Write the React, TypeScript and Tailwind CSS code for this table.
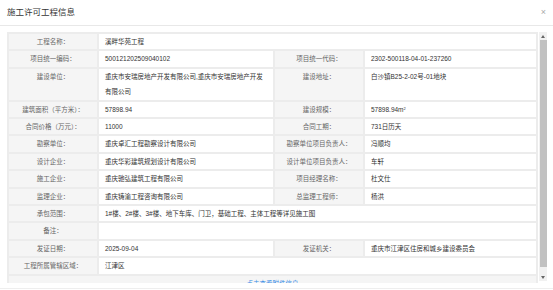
type Row =
  | { kind: 'pair'; l1: string; v1: string; l2: string; v2: React.ReactNode }
  | { kind: 'wide'; l1: string; v1: string };

const ROWS: Row[] = [
  { kind: 'wide', l1: '工程名称：', v1: '溪畔华苑工程' },
  { kind: 'pair', l1: '项目统一编码：', v1: '500121202509040102', l2: '项目统一代码：', v2: '2302-500118-04-01-237260' },
  {
    kind: 'pair',
    l1: '建设单位：',
    v1: '重庆市安瑞房地产开发有限公司,重庆市安瑞房地产开发有限公司',
    l2: '建设地址：',
    v2: '白沙镇B25-2-02号-01地块',
  },
  {
    kind: 'pair',
    l1: '建筑面积（平方米）：',
    v1: '57898.94',
    l2: '建设规模：',
    v2: (
      <>
        57898.94m<sup className="text-[4px]">2</sup>
      </>
    ),
  },
  { kind: 'pair', l1: '合同价格（万元）：', v1: '11000', l2: '合同工期：', v2: '731日历天' },
  { kind: 'pair', l1: '勘察单位：', v1: '重庆卓汇工程勘察设计有限公司', l2: '勘察单位项目负责人：', v2: '冯顺均' },
  { kind: 'pair', l1: '设计企业：', v1: '重庆华彩建筑规划设计有限公司', l2: '设计单位项目负责人：', v2: '车轩' },
  { kind: 'pair', l1: '施工企业：', v1: '重庆驰弘建筑工程有限公司', l2: '项目经理名称：', v2: '杜文仕' },
  { kind: 'pair', l1: '监理企业：', v1: '重庆铸渝工程咨询有限公司', l2: '总监理工程师：', v2: '杨洪' },
  { kind: 'wide', l1: '承包范围：', v1: '1#楼、2#楼、3#楼、地下车库、门卫，基础工程、主体工程等详见施工图' },
  { kind: 'wide', l1: '备注：', v1: '' },
  { kind: 'pair', l1: '发证日期：', v1: '2025-09-04', l2: '发证机关：', v2: '重庆市江津区住房和城乡建设委员会' },
  { kind: 'wide', l1: '工程所属管辖区域：', v1: '江津区' },
];

const label = 'border-2 border-[#ececec] bg-[#f5f5f5] text-center align-top text-[#666]';
const value = 'border-2 border-[#ececec] bg-white pl-[6px] pr-[4px] align-top text-[#333]';

export default function App() {
  return (
    <div
      className="flex h-[290px] w-[553px] flex-col overflow-hidden bg-white"
      style={{ fontFamily: '"Liberation Sans", "Noto Sans CJK SC", sans-serif' }}
    >
      <div className="flex h-[26px] shrink-0 items-center justify-between border-b border-[#e8e8e8] pl-[7px] pr-[7px]">
        <span className="text-[8.5px] text-[#333]">施工许可工程信息</span>
        <span className="text-[9px] leading-none text-[#aaa]">×</span>
      </div>

      <div className="mt-[5px] flex h-[252px] shrink-0">
        <div className="flex-1 overflow-hidden pl-[7px] pt-[1px]">
          <table className="w-full table-fixed border-collapse text-[6.5px] leading-[15.4px]">
            <colgroup>
              <col className="w-[90px]" />
              <col className="w-[176px]" />
              <col className="w-[90px]" />
              <col />
            </colgroup>
            <tbody>
              {ROWS.map((r) =>
                r.kind === 'wide' ? (
                  <tr key={r.l1}>
                    <td className={label}>{r.l1}</td>
                    <td className={value} colSpan={3}>
                      {r.v1}
                    </td>
                  </tr>
                ) : (
                  <tr key={r.l1}>
                    <td className={label}>{r.l1}</td>
                    <td className={value}>{r.v1}</td>
                    <td className={label}>{r.l2}</td>
                    <td className={value}>{r.v2}</td>
                  </tr>
                ),
              )}
              <tr>
                <td colSpan={4} className="border-2 border-[#ececec] bg-[#f5f5f5] text-center text-[#3a8ee6]">
                  点击查看附件信息
                </td>
              </tr>
            </tbody>
          </table>
        </div>

        <div className="ml-[1px] mr-[6px] mt-[1px] flex h-[249px] w-[8px] flex-col bg-[#f1f1f1]">
          <div className="flex h-[8px] items-center justify-center">
            <svg width="4" height="3" viewBox="0 0 4 3">
              <path d="M0 3 L2 0 L4 3 Z" fill="#666" />
            </svg>
          </div>
          <div className="mx-auto h-[227px] w-[7px] bg-[#c1c1c1]" />
          <div className="flex-1" />
          <div className="flex h-[8px] items-center justify-center">
            <svg width="4" height="3" viewBox="0 0 4 3">
              <path d="M0 0 L4 0 L2 3 Z" fill="#666" />
            </svg>
          </div>
        </div>
      </div>

      <div className="mt-[5px] border-t border-[#eee]" />
    </div>
  );
}
